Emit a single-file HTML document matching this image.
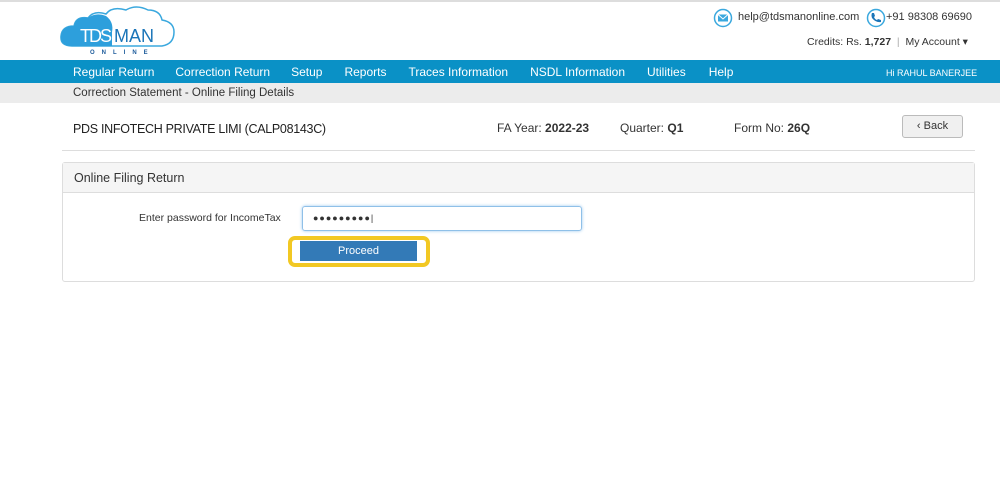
<!DOCTYPE html>
<html><head><style>
*{margin:0;padding:0;box-sizing:border-box}
body{width:1000px;height:500px;background:#fff;font-family:"Liberation Sans",sans-serif;position:relative;overflow:hidden;color:#333}
.a{position:absolute;white-space:nowrap}
</style></head><body>
<div class="a" style="left:0;top:0;width:1000px;height:2px;background:#ddd"></div>
<svg class="a" style="left:60px;top:4px" width="120" height="52" viewBox="0 0 120 52">
<path d="M12 42 Q0 42 1 32 Q2 22 14 22 Q16 12 28 14 Q34 6 46 10 Q52 2 66 6 Q76 0 88 6 Q100 6 102 16 Q114 18 114 28 Q114 40 102 42 Z" fill="#fff" stroke="#3aa8de" stroke-width="1.5"/>
<path d="M12 42 Q0 42 1 32 Q2 22 14 22 Q16 12 28 14 Q36 8 46 12 Q54 18 52 28 L52 42 Z" fill="#2d9fdc"/>
<text x="20" y="38" font-family="Liberation Sans" font-size="18" fill="#fff" textLength="32">TDS</text>
<text x="54" y="38" font-family="Liberation Sans" font-size="18" fill="#1b75b8" textLength="40">MAN</text>
<text x="30" y="50" font-family="Liberation Sans" font-size="6" font-weight="bold" fill="#1b5a9a" letter-spacing="7">ONLINE</text>
</svg>
<svg class="a" style="left:713px;top:8px" width="20" height="20"><circle cx="10" cy="10" r="8.5" fill="none" stroke="#3aa8de" stroke-width="1.5"/><rect x="5" y="6.5" width="10" height="7" fill="#3aa8de"/><path d="M5 6.5 L10 11 L15 6.5" stroke="#fff" fill="none"/></svg>
<div class="a" style="left:738px;top:11px;font-size:11px">help@tdsmanonline.com</div>
<svg class="a" style="left:866px;top:8px" width="20" height="20"><circle cx="10" cy="10" r="8.5" fill="none" stroke="#3aa8de" stroke-width="1.5"/><path d="M6 5 L8 5 L9 8 L8 9 Q9 11.5 11 12 L12 11 L15 12 L15 14 Q10 15 6 10 Q5 7 6 5Z" fill="#1b75b8"/></svg>
<div class="a" style="left:886px;top:11px;font-size:11px">+91 98308 69690</div>
<div class="a" style="left:807px;top:36px;font-size:10.5px">Credits: Rs. <b>1,727</b> &nbsp;<span style="color:#aaa">|</span>&nbsp; My Account ▾</div>
<div class="a" style="left:0;top:60px;width:1000px;height:23px;background:#0a91c6"></div>
<div class="a" style="left:73px;top:65px;font-size:12px;color:#fff">Regular Return<span style="margin-left:21px">Correction Return</span><span style="margin-left:21px">Setup</span><span style="margin-left:22px">Reports</span><span style="margin-left:22px">Traces Information</span><span style="margin-left:22px">NSDL Information</span><span style="margin-left:22px">Utilities</span><span style="margin-left:23px">Help</span></div>
<div class="a" style="left:886px;top:68px;font-size:9px;color:#fff">Hi RAHUL BANERJEE</div>
<div class="a" style="left:0;top:83px;width:1000px;height:20px;background:#ececec"></div>
<div class="a" style="left:73px;top:87px;font-size:11.5px">Correction Statement - Online Filing Details</div>
<div class="a" style="left:73px;top:122px;font-size:12.5px;color:#222;letter-spacing:-0.3px">PDS INFOTECH PRIVATE LIMI (CALP08143C)</div>
<div class="a" style="left:497px;top:121px;font-size:12px">FA Year: <b>2022-23</b></div>
<div class="a" style="left:620px;top:121px;font-size:12px">Quarter: <b>Q1</b></div>
<div class="a" style="left:734px;top:121px;font-size:12px">Form No: <b>26Q</b></div>
<div class="a" style="left:902px;top:115px;width:61px;height:23px;border:1px solid #bbb;border-radius:3px;background:#f0f0f0;font-size:11px;text-align:center;line-height:21px">‹ Back</div>
<div class="a" style="left:62px;top:150px;width:913px;height:1px;background:#ddd"></div>
<div class="a" style="left:62px;top:162px;width:913px;height:120px;border:1px solid #ddd;border-radius:3px"></div>
<div class="a" style="left:63px;top:163px;width:911px;height:30px;background:#f5f5f5;border-bottom:1px solid #ddd"></div>
<div class="a" style="left:74px;top:171px;font-size:12.5px">Online Filing Return</div>
<div class="a" style="left:139px;top:212px;font-size:10.5px">Enter password for IncomeTax</div>
<div class="a" style="left:302px;top:206px;width:280px;height:25px;border:1px solid #8fc0e8;border-radius:3px;box-shadow:0 0 3px #9cc8ee;font-size:9px;padding:6px 0 0 10px;letter-spacing:1px">●●●●●●●●●|</div>
<div class="a" style="left:288px;top:236px;width:142px;height:31px;border:4px solid #f2c823;border-radius:7px;background:#fff"></div>
<div class="a" style="left:300px;top:241px;width:117px;height:20px;background:#337ab7;color:#fff;font-size:11px;text-align:center;line-height:20px">Proceed</div>
</body></html>
